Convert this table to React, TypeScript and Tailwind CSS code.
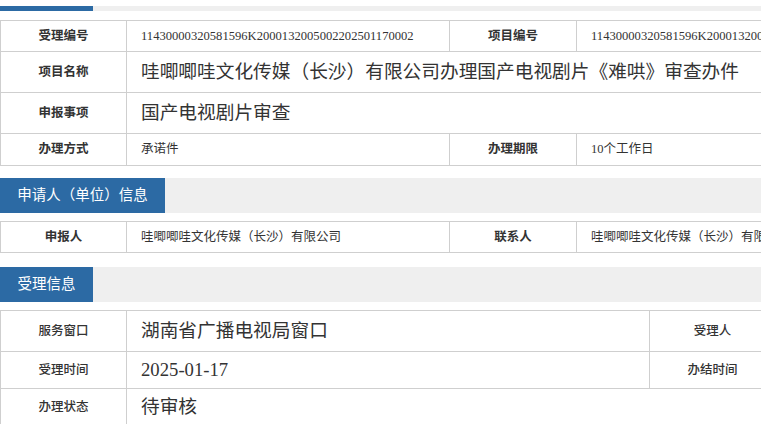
const labelCls =
  "border border-[#cfcfcf] text-center text-[12.5px] font-bold text-[#333]";
const valueCls = "border border-[#cfcfcf] pl-[14px] text-left text-[#333]";

function SectionHeader({ title, tab }: { title: string; tab: string }) {
  return (
    <div className="flex h-[35px] bg-[#efefef]">
      <div
        className={`flex items-center justify-center whitespace-nowrap bg-[#2c6aa4] text-[14.5px] text-white ${tab}`}
      >
        {title}
      </div>
    </div>
  );
}

export default function App() {
  return (
    <div
      className="h-[424px] w-[761px] overflow-hidden bg-white"
      style={{ fontFamily: '"Liberation Serif", "Noto Sans CJK SC", serif' }}
    >
      <div className="w-[900px]">
        {/* tail of a section header scrolled out of view */}
        <div className="mt-[6px] flex h-[5px] bg-[#efefef]">
          <div className="w-[93px] bg-[#2c6aa4]" />
        </div>

        <table className="mt-[9px] w-[900px] table-fixed border-collapse">
          <colgroup>
            <col className="w-[126px]" />
            <col className="w-[323px]" />
            <col className="w-[127px]" />
            <col />
          </colgroup>
          <tbody>
            <tr className="h-[31px]">
              <td className={labelCls}>受理编号</td>
              <td className={`${valueCls} text-[12.6px]`}>11430000320581596K2000132005002202501170002</td>
              <td className={labelCls}>项目编号</td>
              <td className={`${valueCls} whitespace-nowrap text-[12.6px]`}>
                11430000320581596K2000132005002202501170002
              </td>
            </tr>
            <tr className="h-[41px]">
              <td className={labelCls}>项目名称</td>
              <td colSpan={3} className={`${valueCls} text-[18.7px]`}>
                哇唧唧哇文化传媒（长沙）有限公司办理国产电视剧片《难哄》审查办件
              </td>
            </tr>
            <tr className="h-[41px]">
              <td className={labelCls}>申报事项</td>
              <td colSpan={3} className={`${valueCls} text-[18.7px]`}>国产电视剧片审查</td>
            </tr>
            <tr className="h-[32px]">
              <td className={labelCls}>办理方式</td>
              <td className={`${valueCls} text-[12.5px]`}>承诺件</td>
              <td className={labelCls}>办理期限</td>
              <td className={`${valueCls} text-[12.5px]`}>10个工作日</td>
            </tr>
          </tbody>
        </table>

        <div className="mt-[12px]">
          <SectionHeader title="申请人（单位）信息" tab="w-[165px]" />
        </div>

        <table className="mt-[8px] w-[900px] table-fixed border-collapse">
          <colgroup>
            <col className="w-[126px]" />
            <col className="w-[323px]" />
            <col className="w-[127px]" />
            <col />
          </colgroup>
          <tbody>
            <tr className="h-[31px]">
              <td className={labelCls}>申报人</td>
              <td className={`${valueCls} text-[12.5px]`}>哇唧唧哇文化传媒（长沙）有限公司</td>
              <td className={labelCls}>联系人</td>
              <td className={`${valueCls} whitespace-nowrap text-[12.5px]`}>
                哇唧唧哇文化传媒（长沙）有限公司
              </td>
            </tr>
          </tbody>
        </table>

        <div className="mt-[14px]">
          <SectionHeader title="受理信息" tab="w-[93px]" />
        </div>

        <table className="mt-[8px] w-[900px] table-fixed border-collapse">
          <colgroup>
            <col className="w-[126px]" />
            <col className="w-[523px]" />
            <col className="w-[126px]" />
            <col />
          </colgroup>
          <tbody>
            <tr className="h-[41px]">
              <td className={`${labelCls} !font-medium`}>服务窗口</td>
              <td className={`${valueCls} text-[18.7px]`}>湖南省广播电视局窗口</td>
              <td className={`${labelCls} !font-medium`}>受理人</td>
              <td className={valueCls}></td>
            </tr>
            <tr className="h-[37px]">
              <td className={`${labelCls} !font-medium`}>受理时间</td>
              <td className={`${valueCls} text-[18.7px]`}>2025-01-17</td>
              <td className={`${labelCls} !font-medium`}>办结时间</td>
              <td className={valueCls}></td>
            </tr>
            <tr className="h-[38px]">
              <td className={`${labelCls} !font-medium`}>办理状态</td>
              <td colSpan={3} className={`${valueCls} text-[18.7px]`}>待审核</td>
            </tr>
          </tbody>
        </table>
      </div>
    </div>
  );
}
